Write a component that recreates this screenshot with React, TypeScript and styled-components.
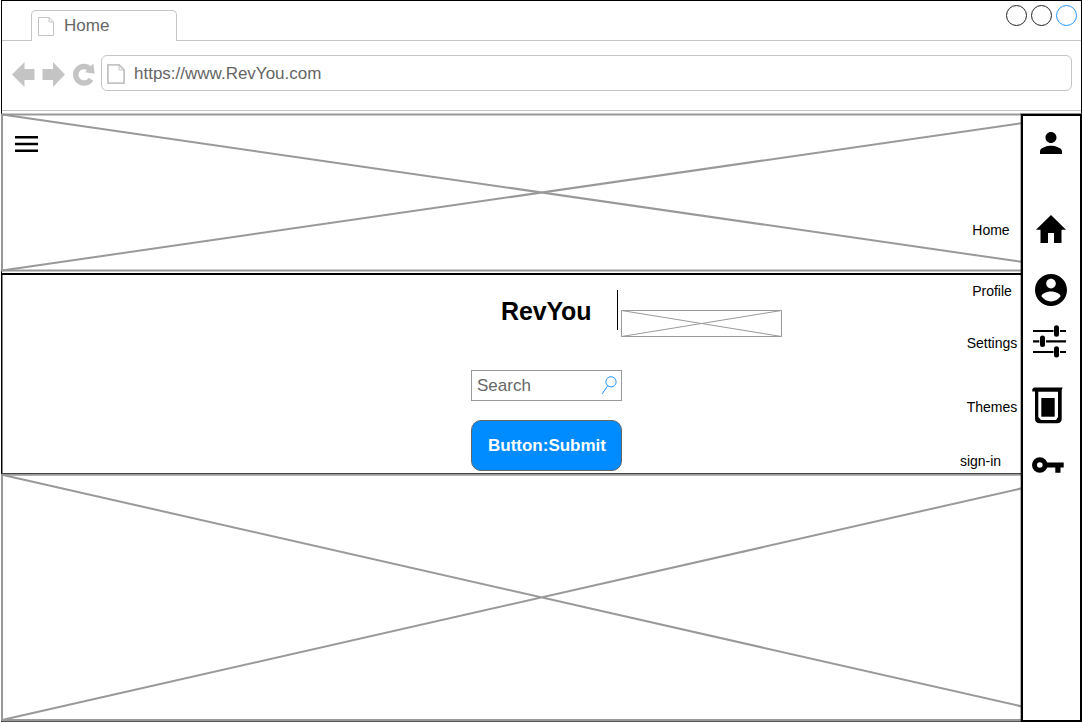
import React from "react";
import styled, { createGlobalStyle } from "styled-components";

const Global = createGlobalStyle`
  *, *::before, *::after { box-sizing: border-box; }
  body { margin: 0; background: #fff; font-family: "Liberation Sans", Arial, sans-serif; overflow: hidden; }
  svg { display: block; flex: none; }
`;

const line = "#c4c4c4";
const sketch = "#999";

const Browser = styled.div`
  position: relative;
  width: 1081px;
  height: 722px;
  margin-left: 1px;
  border: 1px solid #000;
  border-bottom-color: #555;
  display: flex;
  flex-direction: column;
`;

const TabStrip = styled.header`
  height: 40px;
  display: flex;
  justify-content: space-between;
  align-items: flex-end;
  border-bottom: 1px solid ${line};
  padding: 0 4px 0 29px;
`;

const Tab = styled.div`
  width: 146px;
  height: 31px;
  margin-bottom: -1px;
  border: 1px solid ${line};
  border-bottom: 0;
  border-radius: 5px 5px 0 0;
  background: #fff;
  display: flex;
  align-items: center;
  gap: 10px;
  padding-left: 6px;
  color: #666;
  font-size: 17px;
  line-height: 20px;
`;

const WindowButtons = styled.div`
  display: flex;
  gap: 4px;
  align-self: flex-start;
  padding-top: 4px;
`;

const WindowButton = styled.span<{ $color: string }>`
  width: 21px;
  height: 21px;
  border: 1px solid ${(p) => p.$color};
  border-radius: 50%;
`;

const Toolbar = styled.div`
  height: 70px;
  display: flex;
  align-items: flex-start;
  padding: 14px 9px 0 10px;
  border-bottom: 1px solid ${line};
`;

const NavButtons = styled.div`
  display: flex;
  width: 89px;
  padding-top: 7px;
`;

const AddressBar = styled.div`
  flex: 1;
  height: 36px;
  border: 1px solid ${line};
  border-radius: 6px;
  display: flex;
  align-items: center;
  gap: 9px;
  padding: 2px 0 0 5px;
  color: #666;
  font-size: 17px;
  line-height: 20px;
`;

const Page = styled.main`
  flex: 1;
  min-height: 0;
  display: flex;
  flex-direction: column;
  padding-top: 2px;
  margin-left: -1px;
  width: 1081px;
`;

const Banner = styled.section<{ $height: number }>`
  position: relative;
  flex: none;
  height: ${(p) => p.$height}px;
`;

const Hamburger = styled.button`
  position: absolute;
  left: 14px;
  top: 23px;
  width: 23px;
  height: 16px;
  padding: 0;
  border: 0;
  background: none;
`;

const Hero = styled.section`
  flex: none;
  height: 201px;
  border: 2px solid #000;
  border-left-width: 1px;
  border-bottom: 1px solid #444;
  box-shadow: inset 1px 0 #888;
  display: flex;
  flex-direction: column;
  padding: 15px 0 0 469px;
`;

const Brand = styled.div`
  display: flex;
  height: 80px;
  padding-left: 30px;
`;

const Title = styled.h1`
  margin: 0;
  width: 117px;
  height: 40px;
  border-right: 1px solid #000;
  font-size: 25px;
  letter-spacing: -0.15px;
  line-height: 42px;
`;

const Tagline = styled.div`
  margin: 20px 0 0 3px;
`;

const SearchBox = styled.label`
  width: 151px;
  height: 31px;
  border: 1px solid ${sketch};
  display: flex;
  align-items: center;
  justify-content: space-between;
  padding: 0 4px 0 5px;
  color: #666;
  font-size: 17px;
  line-height: 20px;
`;

const Submit = styled.button`
  width: 151px;
  height: 51px;
  margin-top: 19px;
  padding: 0 0 0 1px;
  border: 1px solid #666;
  border-radius: 10px;
  background: #008cff;
  color: #fff;
  font: bold 17px/20px "Liberation Sans", Arial, sans-serif;
`;

const SideMenu = styled.nav`
  position: absolute;
  right: -1px;
  top: 113px;
  width: 123px;
  height: 608px;
  padding-top: 9px;
  display: flex;
  flex-direction: column;
  background: linear-gradient(#fff, #fff) right / 61px 100% no-repeat;
  &::after {
    content: "";
    position: absolute;
    inset: 0 0 0 auto;
    width: 61px;
    border: 2px solid #000;
    box-shadow: -1px -1px rgba(0, 0, 0, 0.3);
  }
`;

const MenuItem = styled.a<{ $gap: number }>`
  height: 40px;
  margin-top: ${(p) => p.$gap}px;
  flex: none;
  display: grid;
  grid-template-columns: 66px 57px;
  align-items: center;
  color: #000;
  font-size: 14px;
  line-height: 16px;
`;

const Label = styled.span<{ $inset?: number; $raised?: boolean }>`
  text-align: center;
  white-space: nowrap;
  padding-right: ${(p) => p.$inset ?? 0}px;
  padding-top: ${(p) => (p.$raised ? 0 : 2)}px;
  padding-bottom: ${(p) => (p.$raised ? 9 : 0)}px;
`;

const IconCell = styled.i<{ $left: number; $raise?: number }>`
  padding-left: ${(p) => p.$left}px;
  padding-bottom: ${(p) => p.$raise ?? 0}px;
`;

function PageIcon({ w, h, stroke }: { w: number; h: number; stroke: number }) {
  const s = stroke / 2;
  const f = w * 0.28;
  return (
    <svg width={w} height={h} fill="none" stroke={line} strokeWidth={stroke}>
      <path d={`M${s} ${s}H${w - f - s}L${w - s} ${f + s}V${h - s}H${s}Z`} />
      <path d={`M${w - f - s} ${s}V${f + s}H${w - s}`} strokeWidth="1" />
    </svg>
  );
}

function Placeholder({ height, top, bottom }: { height: number; top: number; bottom: number }) {
  return (
    <svg width="1081" height={height} fill="none" stroke={sketch} strokeWidth="2">
      <path d={`M1 ${top}H1080.5V${bottom}H1Z`} />
      <path d={`M1 ${top}L1080.5 ${bottom}M1 ${bottom}L1080.5 ${top}`} />
    </svg>
  );
}

export default function App() {
  return (
    <>
      <Global />
      <Browser>
        <TabStrip>
          <Tab>
            <PageIcon w={16} h={19} stroke={1} />
            Home
          </Tab>
          <WindowButtons>
            <WindowButton $color="#222" />
            <WindowButton $color="#222" />
            <WindowButton $color="#2196ff" />
          </WindowButtons>
        </TabStrip>
        <Toolbar>
          <NavButtons>
            <svg width="89" height="26" fill={line}>
              <path d="M0 12.5L12.5 0V7H22.500V18H12.5V25Z" />
              <path d="M30.500 7H41V0L53 12.500L41 25V18H30.500Z" />
              <path d="M79 17.200A8.300 8.300 0 1 1 78 7" fill="none" stroke={line} strokeWidth="5.400" />
              <path d="M81.300 1.500L82.700 11.800L73 10.300Z" />
            </svg>
          </NavButtons>
          <AddressBar>
            <PageIcon w={18} h={20} stroke={1.8} />
            https://www.RevYou.com
          </AddressBar>
        </Toolbar>
        <Page>
          <Banner $height={160}>
            <Placeholder height={160} top={1.5} bottom={157.5} />
            <Hamburger aria-label="Menu">
              <svg width="23" height="16">
                <path d="M0 1.250H23M0 8H23M0 14.750H23" stroke="#000" strokeWidth="2.500" />
              </svg>
            </Hamburger>
          </Banner>
          <Hero>
            <Brand>
              <Title>RevYou</Title>
              <Tagline>
                <svg width="161" height="27" fill="none" stroke={sketch}>
                  <path d="M.5 .5H160.500V26.500H.5ZM.5 .5L160.500 26.500M.5 26.500L160.500 .5" />
                </svg>
              </Tagline>
            </Brand>
            <SearchBox>
              Search
              <svg width="16" height="19" fill="none" stroke="#2196ff">
                <circle cx="10" cy="5.800" r="5.100" />
                <path d="M6.700 9.800L1 18" />
              </svg>
            </SearchBox>
            <Submit>Button:Submit</Submit>
          </Hero>
          <Banner $height={247}>
            <Placeholder height={247} top={0.75} bottom={246} />
          </Banner>
        </Page>
        <SideMenu>
          <MenuItem $gap={0} aria-label="Account">
            <span />
            <IconCell $left={15}>
              <svg width="22" height="22" viewBox="4 4 16 16">
                <path d="M12 12c2.210 0 4-1.790 4-4s-1.790-4-4-4-4 1.790-4 4 1.790 4 4 4zm0 2c-2.670 0-8 1.340-8 4v2h16v-2c0-2.660-5.330-4-8-4z" />
              </svg>
            </IconCell>
          </MenuItem>
          <MenuItem $gap={46}>
            <Label $inset={2}>Home</Label>
            <IconCell $left={11}>
              <svg width="30" height="28" viewBox="2 3 20 17" preserveAspectRatio="none">
                <path d="M10 20v-6h4v6h5v-8h3L12 3 2 12h3v8z" />
              </svg>
            </IconCell>
          </MenuItem>
          <MenuItem $gap={21}>
            <Label>Profile</Label>
            <IconCell $left={10}>
              <svg width="32" height="32" viewBox="2 2 20 20">
                <path d="M12 2C6.480 2 2 6.480 2 12s4.480 10 10 10 10-4.480 10-10S17.520 2 12 2zm0 3c1.660 0 3 1.340 3 3s-1.340 3-3 3-3-1.340-3-3 1.340-3 3-3zm0 14.200c-2.500 0-4.710-1.280-6-3.220.03-1.990 4-3.080 6-3.080 1.990 0 5.970 1.090 6 3.080-1.290 1.940-3.500 3.220-6 3.220z" />
              </svg>
            </IconCell>
          </MenuItem>
          <MenuItem $gap={12}>
            <Label>Settings</Label>
            <IconCell $left={8} $raise={1}>
              <svg width="33" height="33" fill="none" stroke="#000" strokeWidth="2.200">
                <path d="M0 6H20.500M27 6H33M0 16.300H6.300M13 16.300H33M0 27H20.500M27 27H33" />
                <path d="M23.500 2.800V9.200M9.500 13V19.500M23.500 23.700V30" strokeWidth="5" strokeLinecap="round" />
              </svg>
            </IconCell>
          </MenuItem>
          <MenuItem $gap={24}>
            <Label>Themes</Label>
            <IconCell $left={7} $raise={1}>
              <svg width="32" height="37">
                <path d="M2 .5H30.700L29.700 3V31.500Q29.700 36.300 25 36.300H8Q3 36.300 3 31.500V4.500H.3V2Z" />
                <path d="M6.300 4.700H26V30L24 33H9L6.300 30Z" fill="#fff" />
                <path d="M9.300 11H22.700V29.700H9.300Z" />
              </svg>
            </IconCell>
          </MenuItem>
          <MenuItem $gap={19}>
            <Label $inset={23} $raised>sign-in</Label>
            <IconCell $left={7} $raise={1}>
              <svg width="32" height="16">
                <circle cx="7.800" cy="8" r="5.300" fill="none" stroke="#000" strokeWidth="5" />
                <path d="M13 5.500H31.700V10.500H28.500V15.800H23.300V10.500H13Z" />
              </svg>
            </IconCell>
          </MenuItem>
        </SideMenu>
      </Browser>
    </>
  );
}
